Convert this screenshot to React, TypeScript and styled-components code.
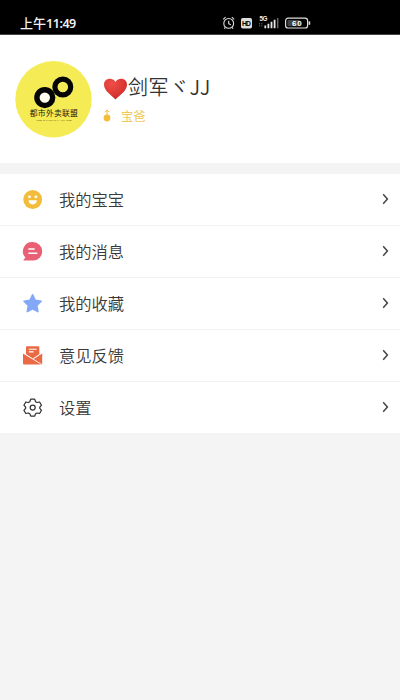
import React from 'react';
import styled, { createGlobalStyle } from 'styled-components';

const GlobalStyle = createGlobalStyle`
  * { box-sizing: border-box; }
  body {
    margin: 0;
    background: #f4f4f4;
    font-family: "Noto Sans CJK SC", sans-serif;
    color: #333;
  }
`;

const Screen = styled.main`
  width: 400px;
  height: 700px;
  background: #f4f4f4;
  overflow: hidden;
`;

const StatusBar = styled.header`
  display: flex;
  align-items: center;
  justify-content: space-between;
  height: 35px;
  padding: 12px 89px 0 20px;
  background: #000;
  border-bottom: 1px solid #484446;
`;

const Clock = styled.time`
  color: #f2f2f2;
  font-size: 13px;
  font-weight: 500;
  line-height: 20px;
  white-space: nowrap;
`;

const Digits = styled.span`
  font-family: "Noto Sans", sans-serif;
  font-weight: 600;
  font-size: 12.5px;
  letter-spacing: -0.45px;
`;

const StatusIcons = styled.svg`
  display: block;
  width: 89px;
  height: 18px;
  flex: none;
`;

const Profile = styled.section`
  display: flex;
  align-items: flex-start;
  height: 128px;
  padding: 26px 15px 0;
  background: #fff;
`;

const Avatar = styled.svg`
  display: block;
  width: 77px;
  height: 77px;
  flex: none;
`;

const Identity = styled.div`
  padding: 11px 0 0 11px;
`;

const NameLine = styled.div`
  display: flex;
  align-items: center;
  height: 30px;
`;

const Heart = styled.svg`
  width: 25px;
  height: 24px;
  margin-top: 3px;
  flex: none;
`;

const Name = styled.h1`
  margin: 0;
  font-size: 20px;
  font-weight: 350;
  line-height: 30px;
  letter-spacing: 0.5px;
  white-space: nowrap;
  color: #333;
`;

const RoleLine = styled.div`
  display: flex;
  align-items: center;
  height: 20px;
  margin-top: 4px;
`;

const RoleIcon = styled.svg`
  width: 8px;
  height: 13px;
  margin: -2px 10px 0 0;
`;

const Role = styled.span`
  color: #f0c958;
  font-size: 12.3px;
  line-height: 20px;
`;

const Menu = styled.nav`
  height: 259px;
  margin-top: 11px;
  display: grid;
  grid-template-rows: 52px 52px 52px 52px 51px;
  background: #fff;
`;

const MenuRow = styled.a`
  display: flex;
  align-items: center;
  padding: 0 11px 0 22px;
  border-bottom: 1px solid #f2f2f2;
  &:last-child { border-bottom: 0; }
`;

const RowIcon = styled.svg`
  width: 21px;
  height: 21px;
  flex: none;
`;

const Label = styled.span`
  flex: 1;
  margin-left: 16px;
  padding-bottom: 1px;
  font-size: 16.3px;
  font-weight: 350;
  line-height: 24px;
  color: #3a3a3a;
`;

const Chevron = styled.svg`
  width: 8px;
  height: 12px;
  margin-bottom: 1px;
  flex: none;
`;

const icons: Record<string, React.ReactNode> = {
  baby: (
    <>
      <circle cx="10.7" cy="10.5" r="9.4" fill="#f3bd3c" />
      <circle cx="7.5" cy="7.8" r="1.4" fill="#fff" />
      <circle cx="13.9" cy="7.8" r="1.4" fill="#fff" />
      <path d="M6.6 11.3h8.2a4.1 4.1 0 0 1-8.2 0z" fill="#fff" />
    </>
  ),
  message: (
    <>
      <path d="M10.9 1a9.3 9.3 0 1 1 0 18.6H2.3c-.8 0-1-.6-.5-1.1l1.6-1.9A9.3 9.3 0 0 1 10.9 1z" fill="#e96075" />
      <path d="M6.9 8.1h5.2M6.9 12.2h7.9" stroke="#fff" strokeWidth="1.5" strokeLinecap="round" />
    </>
  ),
  favorite: (
    <path
      d="M10.6 1.8l2.6 5.6 6 .8-4.4 4.3 1.1 6.1-5.3-2.9-5.3 2.9 1.1-6.1L2 8.2l6-.8z"
      fill="#83a8f7"
      stroke="#83a8f7"
      strokeWidth="1.6"
      strokeLinejoin="round"
    />
  ),
  feedback: (
    <>
      <path d="M5 1.2h11.3q1 0 1 1v7l-6.6 4.6L4 9.2v-7q0-1 1-1z" fill="#e96a45" />
      <path d="M6.8 4.3h7.8M6.8 6.9h4.8" stroke="#fff" strokeWidth="1.1" />
      <path d="M1 8.2v10.4q0 1 1 1h17.2q1 0 1-1V8.2l-9.6 5.9z" fill="#e96a45" />
      <path d="M1 8l18.6 11.4M11.2 14l8.9-6.1" fill="none" stroke="#fff" strokeWidth="0.9" />
    </>
  ),
  settings: (
    <g fill="none" stroke="#333" strokeWidth="1.25" strokeLinejoin="round">
      <path d="M8.7 2.2h4l.9 2.5 1.5.8 2.5-.5 1.9 3.2-1.7 2v1.1l1.7 2-1.9 3.2-2.5-.5-1.5.8-.9 2.2h-4l-.9-2.2-1.5-.8-2.5.5-1.9-3.2 1.7-2v-1.1l-1.7-2L3.8 5l2.5.5 1.5-.8z" />
      <circle cx="10.7" cy="10.6" r="2.5" />
    </g>
  ),
};

const items = [
  { icon: 'baby', label: '我的宝宝' },
  { icon: 'message', label: '我的消息' },
  { icon: 'favorite', label: '我的收藏' },
  { icon: 'feedback', label: '意见反馈' },
  { icon: 'settings', label: '设置' },
];

export default function App() {
  return (
    <>
      <GlobalStyle />
      <Screen>
        <StatusBar>
          <Clock>上午<Digits>11:49</Digits></Clock>
          <StatusIcons viewBox="0 0 89 18" fontFamily="Liberation Sans, sans-serif" fontWeight="700">
            <g fill="none" stroke="#ddd" strokeWidth="1.1">
              <circle cx="6.7" cy="9.4" r="4.9" />
              <path d="M6.7 6.8v2.9l2.2 1M1.2 5.4l2.4-2.2M9.8 3.2l2.4 2.2M3.4 13.3l-1.1 1.3M10 13.3l1.1 1.3" />
            </g>
            <rect x="19" y="4" width="11" height="10.5" rx="1.8" fill="#ddd" />
            <text x="20.1" y="12.1" fontSize="6.8" textLength="8.8" fill="#000">HD</text>
            <text x="37.4" y="7" fontSize="6.4" textLength="8" fill="#eee">5G</text>
            <path d="M37.6 9v4M39.9 9v4" stroke="#777" strokeWidth=".8" strokeDasharray="1.4 .7" />
            <path d="M43.3 11.5v2.8M46.4 9.8v4.5M49.5 7.8v6.5M52.6 5.8v8.5" stroke="#e6e6e6" strokeWidth="1.8" />
            <path d="M55.7 4v10.3" stroke="#666" strokeWidth="1.5" />
            <rect x="63.6" y="4.2" width="22" height="9.8" rx="2.6" fill="#000" stroke="#ddd" strokeWidth="1.2" />
            <rect x="65.4" y="6" width="12.5" height="6.2" rx="1" fill="#444" />
            <path d="M87.4 7.4v3.4" stroke="#ddd" strokeWidth="1.6" />
            <text x="70" y="12" fontSize="8" textLength="9.6" fill="#fff">60</text>
          </StatusIcons>
        </StatusBar>

        <Profile>
          <Avatar viewBox="0 0 77 77">
            <circle cx="38.5" cy="38.2" r="38.2" fill="#f5ec55" />
            <circle cx="47.8" cy="26" r="7.9" fill="none" stroke="#050505" strokeWidth="5.2" />
            <circle cx="29.8" cy="36.6" r="7.9" fill="#fffef0" stroke="#050505" strokeWidth="5.4" />
            <text x="14.8" y="54.8" fontSize="7.8" fontWeight="400" textLength="48" fill="#24220d">都市外卖联盟</text>
            <text x="21.5" y="60.2" fontSize="2.3" fontFamily="Liberation Sans, sans-serif" textLength="35" fill="#55511c">URBAN TAKEAWAY ALLIANCE</text>
          </Avatar>
          <Identity>
            <NameLine>
              <Heart viewBox="0 0 25 24">
                <defs>
                  <radialGradient id="heartFill" cx="35%" cy="25%" r="80%">
                    <stop offset="0" stopColor="#ee4f47" />
                    <stop offset=".65" stopColor="#dc3732" />
                    <stop offset="1" stopColor="#b92b2b" />
                  </radialGradient>
                </defs>
                <path d="M12.5 22.4C9 18.7 1 14 1 7.4 1 1.2 9.4-.4 12.5 5 15.6-.4 24 1.2 24 7.4c0 6.6-8 11.3-11.5 15z" fill="url(#heartFill)" />
              </Heart>
              <Name>剑军ヾJJ</Name>
            </NameLine>
            <RoleLine>
              <RoleIcon viewBox="0 0 8 13">
                <circle cx="4" cy="9" r="3.4" fill="#f3bd3c" />
                <path d="M4 6V1M2 3.2l2-2.2 2 2.2" fill="none" stroke="#f3bd3c" strokeWidth="1" />
              </RoleIcon>
              <Role>宝爸</Role>
            </RoleLine>
          </Identity>
        </Profile>

        <Menu>
          {items.map(({ icon, label }) => (
            <MenuRow key={icon}>
              <RowIcon viewBox="0 0 21 21">{icons[icon]}</RowIcon>
              <Label>{label}</Label>
              <Chevron viewBox="0 0 8 12">
                <path d="M2.2 1.3L6.4 6l-4.2 4.7" fill="none" stroke="#444" strokeWidth="1.5" />
              </Chevron>
            </MenuRow>
          ))}
        </Menu>
      </Screen>
    </>
  );
}
